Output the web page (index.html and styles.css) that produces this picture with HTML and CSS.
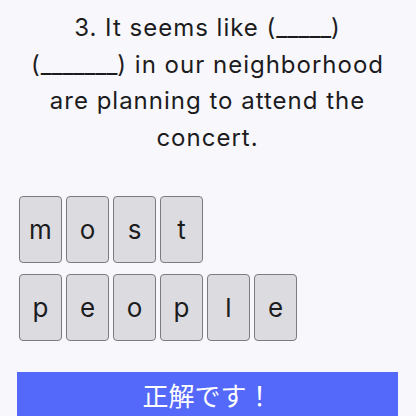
FILE: index.html
```html
<!DOCTYPE html>
<html lang="ja">
<head>
    <meta charset="UTF-8">
    <meta name="viewport" content="width=device-width, initial-scale=1.0">
    <title>Word Order Quiz</title>
    <link rel="stylesheet" href="styles.css">
</head>
<body>

<div class="quiz">
    <p class="question">3. It seems like (<span class="blank">_____</span>) (<span class="blank">_______</span>) in our neighborhood are planning to attend the concert.</p>

    <div class="answer">
        <div class="word-row">
            <div class="tile">m</div>
            <div class="tile">o</div>
            <div class="tile">s</div>
            <div class="tile">t</div>
        </div>
        <div class="word-row">
            <div class="tile">p</div>
            <div class="tile">e</div>
            <div class="tile">o</div>
            <div class="tile">p</div>
            <div class="tile">l</div>
            <div class="tile">e</div>
        </div>
    </div>

    <button class="result-btn">正解です！</button>
</div>

</body>
</html>
```

FILE: styles.css
```css
/* Base */
body {
    margin: 0;
    background-color: #f8f8fc;
    color: #1c1c1e;
    font-family: Inter, "Noto Sans CJK JP", sans-serif;
}

.quiz {
    display: flex;
    flex-direction: column;
    padding: 10px 18px 0 17px;
}

/* Question text */
.question {
    margin: 0;
    padding: 0 8px;
    text-align: center;
    font-size: 24px;
    letter-spacing: 1px;
    line-height: 36.5px;
}

/* keep the underscores joined into one line */
.blank {
    letter-spacing: 0;
}

/* Letter tiles */
.answer {
    display: flex;
    flex-direction: column;
    gap: 11px;
    margin-top: 40px;
    padding-left: 2px;
}

.word-row {
    display: flex;
    gap: 4px;
}

.tile {
    width: 41px;
    height: 65px;
    display: flex;
    align-items: center;
    justify-content: center;
    background-color: #dcdce0;
    border: 1px solid #7c7c80;
    border-radius: 4px;
    font-size: 26px;
}

/* Result button */
.result-btn {
    margin-top: 31px;
    height: 50px;
    border: none;
    background-color: #5468fa;
    color: #ffffff;
    font-family: "Noto Sans CJK JP", sans-serif;
    font-size: 26px;
    padding: 0 0 6px;
}
```
